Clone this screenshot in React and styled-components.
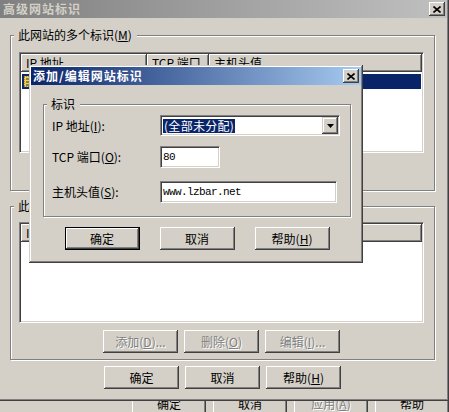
import React from "react";
import styled, { createGlobalStyle } from "styled-components";

const GlobalStyle = createGlobalStyle`
  html, body {
    margin: 0;
    padding: 0;
    background: #d4d0c8;
  }
  body {
    font-family: "Noto Sans CJK SC", "Noto Sans", sans-serif;
    font-size: 12px;
    overflow: hidden;
  }
  * {
    box-sizing: border-box;
  }
`;

const Desktop = styled.div`
  position: relative;
  width: 449px;
  height: 412px;
  overflow: hidden;
  background: #d4d0c8;
  display: flex;
  align-items: flex-end;
`;

const ParentFooter = styled.div`
  display: flex;
  gap: 7px;
  padding-left: 132px;
  margin-bottom: -3px;
`;

const OuterWindow = styled.div`
  position: absolute;
  left: 0;
  top: 0;
  width: 449px;
  height: 401px;
  background: #d4d0c8;
  box-shadow: inset -1px -1px #404040, inset -2px -2px #808080;
  padding: 0 2px 2px 0;
  display: flex;
  flex-direction: column;
`;

const Modal = styled.div`
  position: absolute;
  left: 29px;
  top: 65px;
  width: 334px;
  background: #d4d0c8;
  box-shadow: inset -1px -1px #404040, inset 1px 1px #d4d0c8,
    inset -2px -2px #808080, inset 2px 2px #fff;
  padding: 2px;
  z-index: 2;
`;

const TitleBar = styled.div`
  height: 18px;
  display: flex;
  align-items: center;
  justify-content: space-between;
  padding: 0 2px 0 ${(p) => (p.$active ? 2 : 3)}px;
  background: ${(p) =>
    p.$active
      ? "linear-gradient(to right, #0a246a, #a6caf0)"
      : "linear-gradient(to right, #808080, #c0c0c0)"};
  color: ${(p) => (p.$active ? "#fff" : "#d4d0c8")};
  font-weight: bold;
  font-size: 12px;
  line-height: 14px;
  letter-spacing: 1px;
  white-space: nowrap;
`;

const CloseBtn = styled.span`
  width: 16px;
  height: 14px;
  display: flex;
  align-items: center;
  justify-content: center;
  background: #d4d0c8;
  box-shadow: inset -1px -1px #404040, inset 1px 1px #fff,
    inset -2px -2px #808080;
`;

const OuterBody = styled.div`
  padding: 10px 12px 0 10px;
`;

const ModalBody = styled.div`
  padding: 12px 10px 11px 12px;
`;

const Group = styled.fieldset`
  margin: ${(p) => p.$mt || 0}px 0 0;
  padding: 0;
  min-width: 0;
  border: 1px solid #808080;
  box-shadow: inset 1px 1px #fff, 1px 1px #fff;
`;

const Legend = styled.legend`
  margin-left: 3px;
  padding: 0 5px 0 4px;
  line-height: 14px;
  font-size: 12px;
  background: #d4d0c8;
  color: #000;
  white-space: nowrap;
`;

const GroupContent = styled.div`
  padding: ${(p) => p.$pad};
`;

const ListView = styled.div`
  height: ${(p) => p.$h}px;
  background: #fff;
  border: 1px solid;
  border-color: #808080 #fff #fff #808080;
  box-shadow: inset 1px 1px #404040, inset -1px -1px #d4d0c8;
  padding: 1px;
  display: flex;
  flex-direction: column;
  overflow: hidden;
`;

const ListHeader = styled.div`
  display: grid;
  grid-template-columns: 126px 62px 1fr;
  height: 18px;
  flex: none;
`;

const HeaderCell = styled.div`
  background: #d4d0c8;
  box-shadow: inset -1px -1px #404040, inset 1px 1px #fff,
    inset -2px -2px #808080;
  padding-left: 5px;
  line-height: 18px;
  white-space: nowrap;
  overflow: hidden;
  color: #000;
`;

const ListRows = styled.div`
  padding: 2px 1px 0;
`;

const ListRow = styled.div`
  display: grid;
  grid-template-columns: 125px 62px 1fr;
  height: 15px;
  background: ${(p) => (p.$selected ? "#0a246a" : "transparent")};
  color: ${(p) => (p.$selected ? "#fff" : "#000")};
  line-height: 15px;
`;

const RowCell = styled.div`
  display: flex;
  align-items: center;
  gap: 3px;
  padding-left: ${(p) => p.$pl || 4}px;
  white-space: nowrap;
  overflow: hidden;
`;

const ButtonRow = styled.div`
  display: flex;
  justify-content: center;
  gap: ${(p) => p.$gap}px;
  margin-top: ${(p) => p.$mt}px;
`;

const Button = styled.button`
  width: ${(p) => p.$w || 75}px;
  height: 23px;
  flex: none;
  margin: 0;
  padding: 0;
  font-family: "Noto Sans CJK SC", "Noto Sans", sans-serif;
  font-size: 12px;
  line-height: 14px;
  color: #000;
  background: #d4d0c8;
  border: ${(p) => (p.$default ? "1px solid #000" : "none")};
  box-shadow: inset -1px -1px #404040, inset 1px 1px #fff,
    inset -2px -2px #808080, inset 2px 2px #d4d0c8;
  white-space: nowrap;

  &:disabled {
    color: #808080;
    text-shadow: 1px 1px 0 #fff;
  }
`;

const FieldRow = styled.div`
  display: flex;
  align-items: center;
  margin-top: ${(p) => p.$mt}px;
`;

const FieldLabel = styled.div`
  width: 108px;
  flex: none;
  line-height: 14px;
  white-space: nowrap;
  color: #000;
`;

const Sunken = styled.div`
  width: ${(p) => p.$w}px;
  height: ${(p) => p.$h}px;
  background: #fff;
  border: 1px solid;
  border-color: #808080 #fff #fff #808080;
  box-shadow: inset 1px 1px #404040, inset -1px -1px #d4d0c8;
  padding: 1px 1px 1px 2px;
  display: flex;
  align-items: center;
  justify-content: space-between;
`;

const MonoText = styled.span`
  font-family: "Liberation Mono", "DejaVu Sans Mono", monospace;
  font-size: 11px;
  letter-spacing: -0.6px;
  color: #000;
`;

const Highlight = styled.span`
  height: 14px;
  line-height: 14px;
  padding: 0 1px;
  background: #0a246a;
  color: #fff;
  letter-spacing: 0.3px;
`;

const DropBtn = styled.span`
  width: 16px;
  height: 17px;
  display: flex;
  align-items: center;
  justify-content: center;
  background: #d4d0c8;
  box-shadow: inset -1px -1px #404040, inset 1px 1px #d4d0c8,
    inset -2px -2px #808080, inset 2px 2px #fff;
`;

const CloseGlyph = () => (
  <svg width="8" height="7" viewBox="0 0 8 7">
    <path d="M0.5 0.5 L7.5 6.5 M7.5 0.5 L0.5 6.5" stroke="#000" strokeWidth="1.6" fill="none" />
  </svg>
);

const SiteIcon = () => (
  <svg width="14" height="13" viewBox="0 0 14 13">
    <rect x="1" y="1" width="12" height="11" fill="#f0d050" />
    <path d="M1 1h12v11H1z" fill="none" stroke="#404040" strokeDasharray="1 1" />
    <path d="M3 4h8M3 7h8M3 10h6" stroke="#303030" strokeWidth="1" />
  </svg>
);

const Mn = ({ k }) => <u>{k}</u>;

export default function App() {
  return (
    <>
      <GlobalStyle />
      <Desktop>
        <ParentFooter>
          <Button $w={74}>确定</Button>
          <Button $w={74}>取消</Button>
          <Button $w={74} disabled>
            应用(<Mn k="A" />)
          </Button>
          <Button $w={74}>帮助</Button>
        </ParentFooter>

        <OuterWindow>
          <TitleBar>
            <span>高级网站标识</span>
            <CloseBtn>
              <CloseGlyph />
            </CloseBtn>
          </TitleBar>
          <OuterBody>
            <Group>
              <Legend>
                此网站的多个标识(<Mn k="M" />)
              </Legend>
              <GroupContent $pad="10px 10px 7px 8px">
                <ListView $h={101}>
                  <ListHeader>
                    <HeaderCell>IP 地址</HeaderCell>
                    <HeaderCell>TCP 端口</HeaderCell>
                    <HeaderCell>主机头值</HeaderCell>
                  </ListHeader>
                  <ListRows>
                    <ListRow $selected>
                      <RowCell $pl={1}>
                        <SiteIcon />
                        (全部未分配)
                      </RowCell>
                      <RowCell>80</RowCell>
                      <RowCell>www.lzbar.net</RowCell>
                    </ListRow>
                  </ListRows>
                </ListView>
                <ButtonRow $gap={6} $mt={7}>
                  <Button>
                    添加(<Mn k="A" />)...
                  </Button>
                  <Button>
                    删除(<Mn k="R" />)
                  </Button>
                  <Button>
                    编辑(<Mn k="E" />)...
                  </Button>
                </ButtonRow>
              </GroupContent>
            </Group>

            <Group $mt={8}>
              <Legend>
                此网站的 SSL 标识(<Mn k="L" />)
              </Legend>
              <GroupContent $pad="9px 10px 6px 8px">
                <ListView $h={101}>
                  <ListHeader>
                    <HeaderCell>IP 地址</HeaderCell>
                    <HeaderCell>SSL 端口</HeaderCell>
                    <HeaderCell />
                  </ListHeader>
                </ListView>
                <ButtonRow $gap={6} $mt={7}>
                  <Button disabled>
                    添加(<Mn k="D" />)...
                  </Button>
                  <Button disabled>
                    删除(<Mn k="O" />)
                  </Button>
                  <Button disabled>
                    编辑(<Mn k="I" />)...
                  </Button>
                </ButtonRow>
              </GroupContent>
            </Group>

            <ButtonRow $gap={6} $mt={6}>
              <Button>确定</Button>
              <Button>取消</Button>
              <Button>
                帮助(<Mn k="H" />)
              </Button>
            </ButtonRow>
          </OuterBody>
        </OuterWindow>

        <Modal>
          <TitleBar $active>
            <span>添加/编辑网站标识</span>
            <CloseBtn>
              <CloseGlyph />
            </CloseBtn>
          </TitleBar>
          <ModalBody>
            <Group>
              <Legend>标识</Legend>
              <GroupContent $pad="4px 10px 13px 8px">
                <FieldRow $mt={0}>
                  <FieldLabel>
                    IP 地址(<Mn k="I" />):
                  </FieldLabel>
                  <Sunken $w={180} $h={21}>
                    <Highlight>(全部未分配)</Highlight>
                    <DropBtn>
                      <svg width="7" height="4" viewBox="0 0 7 4">
                        <polygon points="0,0 7,0 3.5,4" fill="#000" />
                      </svg>
                    </DropBtn>
                  </Sunken>
                </FieldRow>
                <FieldRow $mt={10}>
                  <FieldLabel>
                    TCP 端口(<Mn k="O" />):
                  </FieldLabel>
                  <Sunken $w={60} $h={22}>
                    <MonoText>80</MonoText>
                  </Sunken>
                </FieldRow>
                <FieldRow $mt={13}>
                  <FieldLabel>
                    主机头值(<Mn k="S" />):
                  </FieldLabel>
                  <Sunken $w={177} $h={22}>
                    <MonoText>www.lzbar.net</MonoText>
                  </Sunken>
                </FieldRow>
              </GroupContent>
            </Group>
            <ButtonRow $gap={20} $mt={10}>
              <Button $default>确定</Button>
              <Button>取消</Button>
              <Button>
                帮助(<Mn k="H" />)
              </Button>
            </ButtonRow>
          </ModalBody>
        </Modal>
      </Desktop>
    </>
  );
}
